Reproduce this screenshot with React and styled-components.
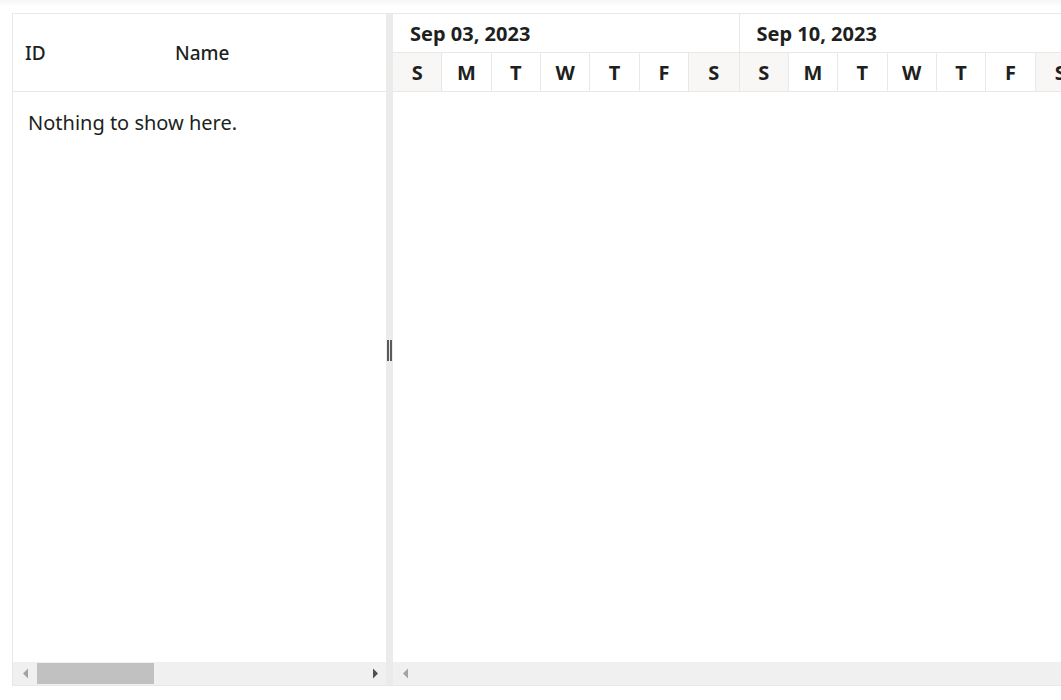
import React from "react";
import styled, { createGlobalStyle } from "styled-components";

const weeks = [
  { label: "Sep 03, 2023" },
  { label: "Sep 10, 2023" },
];
const days = ["S", "M", "T", "W", "T", "F", "S"];

const Global = createGlobalStyle`
  html, body {
    margin: 0;
    background: linear-gradient(#f6f6f6, #fff 7px) no-repeat #fff;
    overflow: hidden;
  }
  body {
    font-family: "Noto Sans", "Open Sans", sans-serif;
    color: #201f1e;
  }
`;

const Page = styled.div`
  padding: 13px 0 0 12px;
  width: 1200px;
`;

const Gantt = styled.div`
  display: flex;
  height: 673px;
  border: 1px solid #e8e8e8;
  border-right: none;
  box-sizing: border-box;
  background: #fff;
`;

const Pane = styled.div`
  display: flex;
  flex-direction: column;
  width: ${(p) => (p.$width ? `${p.$width}px` : "auto")};
  flex: ${(p) => (p.$width ? "none" : "1")};
  overflow: hidden;
`;

const GridHeader = styled.div`
  display: flex;
  height: 77px;
  align-items: center;
  border-bottom: 1px solid #e8e8e8;
  font-size: 19px;
  font-weight: 500;
`;

const HeadCell = styled.div`
  width: ${(p) => p.$w}px;
  padding-left: 12px;
  box-sizing: border-box;
`;

const Body = styled.div`
  flex: 1;
  padding: 17px 15px;
  font-size: 20px;
  line-height: 28px;
`;

const Splitter = styled.div`
  width: 7px;
  background: #ebebeb;
  display: flex;
  align-items: center;
  justify-content: center;
  gap: 1px;
  padding-top: 2px;
`;

const Grip = styled.span`
  width: 2px;
  height: 21px;
  background: #5a5a5a;
`;

const TimeHeader = styled.div`
  display: flex;
  border-bottom: 1px solid #e8e8e8;
`;

const Week = styled.div`
  flex: none;
  width: 346.5px;
  border-right: 1px solid #e8e8e8;
  box-sizing: border-box;
`;

const WeekLabel = styled.div`
  height: 38px;
  line-height: 40px;
  padding-left: 17px;
  font-weight: 700;
  font-size: 20px;
  border-bottom: 1px solid #e8e8e8;
  white-space: nowrap;
`;

const DayRow = styled.div`
  display: grid;
  grid-template-columns: repeat(7, 1fr);
  height: 38px;
`;

const Day = styled.div`
  display: flex;
  align-items: center;
  justify-content: center;
  padding-top: 1px;
  font-weight: 700;
  font-size: 20px;
  background: ${(p) => (p.$weekend ? "#f8f7f6" : "#fff")};
  border-right: 1px solid #e8e8e8;
  &:last-child {
    border-right: none;
  }
`;

const Chart = styled.div`
  flex: 1;
`;

const Scrollbar = styled.div`
  height: 23px;
  background: #f0f0f0;
  display: flex;
  align-items: center;
  padding: 0 6px 0 8px;
  gap: 6px;
  flex: none;
`;

const Thumb = styled.div`
  width: 117px;
  height: 21px;
  background: #c1c1c1;
`;

const Spacer = styled.div`
  flex: 1;
`;

const Arrow = ({ dir, dark }) => (
  <svg width="10" height="11" viewBox="0 0 10 11">
    <path
      d={dir === "left" ? "M7 0.5 L2 5.5 L7 10.5 Z" : "M3 0.5 L8 5.5 L3 10.5 Z"}
      fill={dark ? "#505050" : "#a3a3a3"}
    />
  </svg>
);

export default function App() {
  return (
    <Page>
      <Global />
      <Gantt>
        <Pane $width={373}>
          <GridHeader>
            <HeadCell $w={150}>ID</HeadCell>
            <HeadCell $w={150}>Name</HeadCell>
          </GridHeader>
          <Body>Nothing to show here.</Body>
          <Scrollbar>
            <Arrow dir="left" />
            <Thumb />
            <Spacer />
            <Arrow dir="right" dark />
          </Scrollbar>
        </Pane>
        <Splitter>
          <Grip />
          <Grip />
        </Splitter>
        <Pane>
          <TimeHeader>
            {weeks.map((w) => (
              <Week key={w.label}>
                <WeekLabel>{w.label}</WeekLabel>
                <DayRow>
                  {days.map((d, i) => (
                    <Day key={i} $weekend={i === 0 || i === 6}>
                      {d}
                    </Day>
                  ))}
                </DayRow>
              </Week>
            ))}
          </TimeHeader>
          <Chart />
          <Scrollbar>
            <Arrow dir="left" />
          </Scrollbar>
        </Pane>
      </Gantt>
    </Page>
  );
}
